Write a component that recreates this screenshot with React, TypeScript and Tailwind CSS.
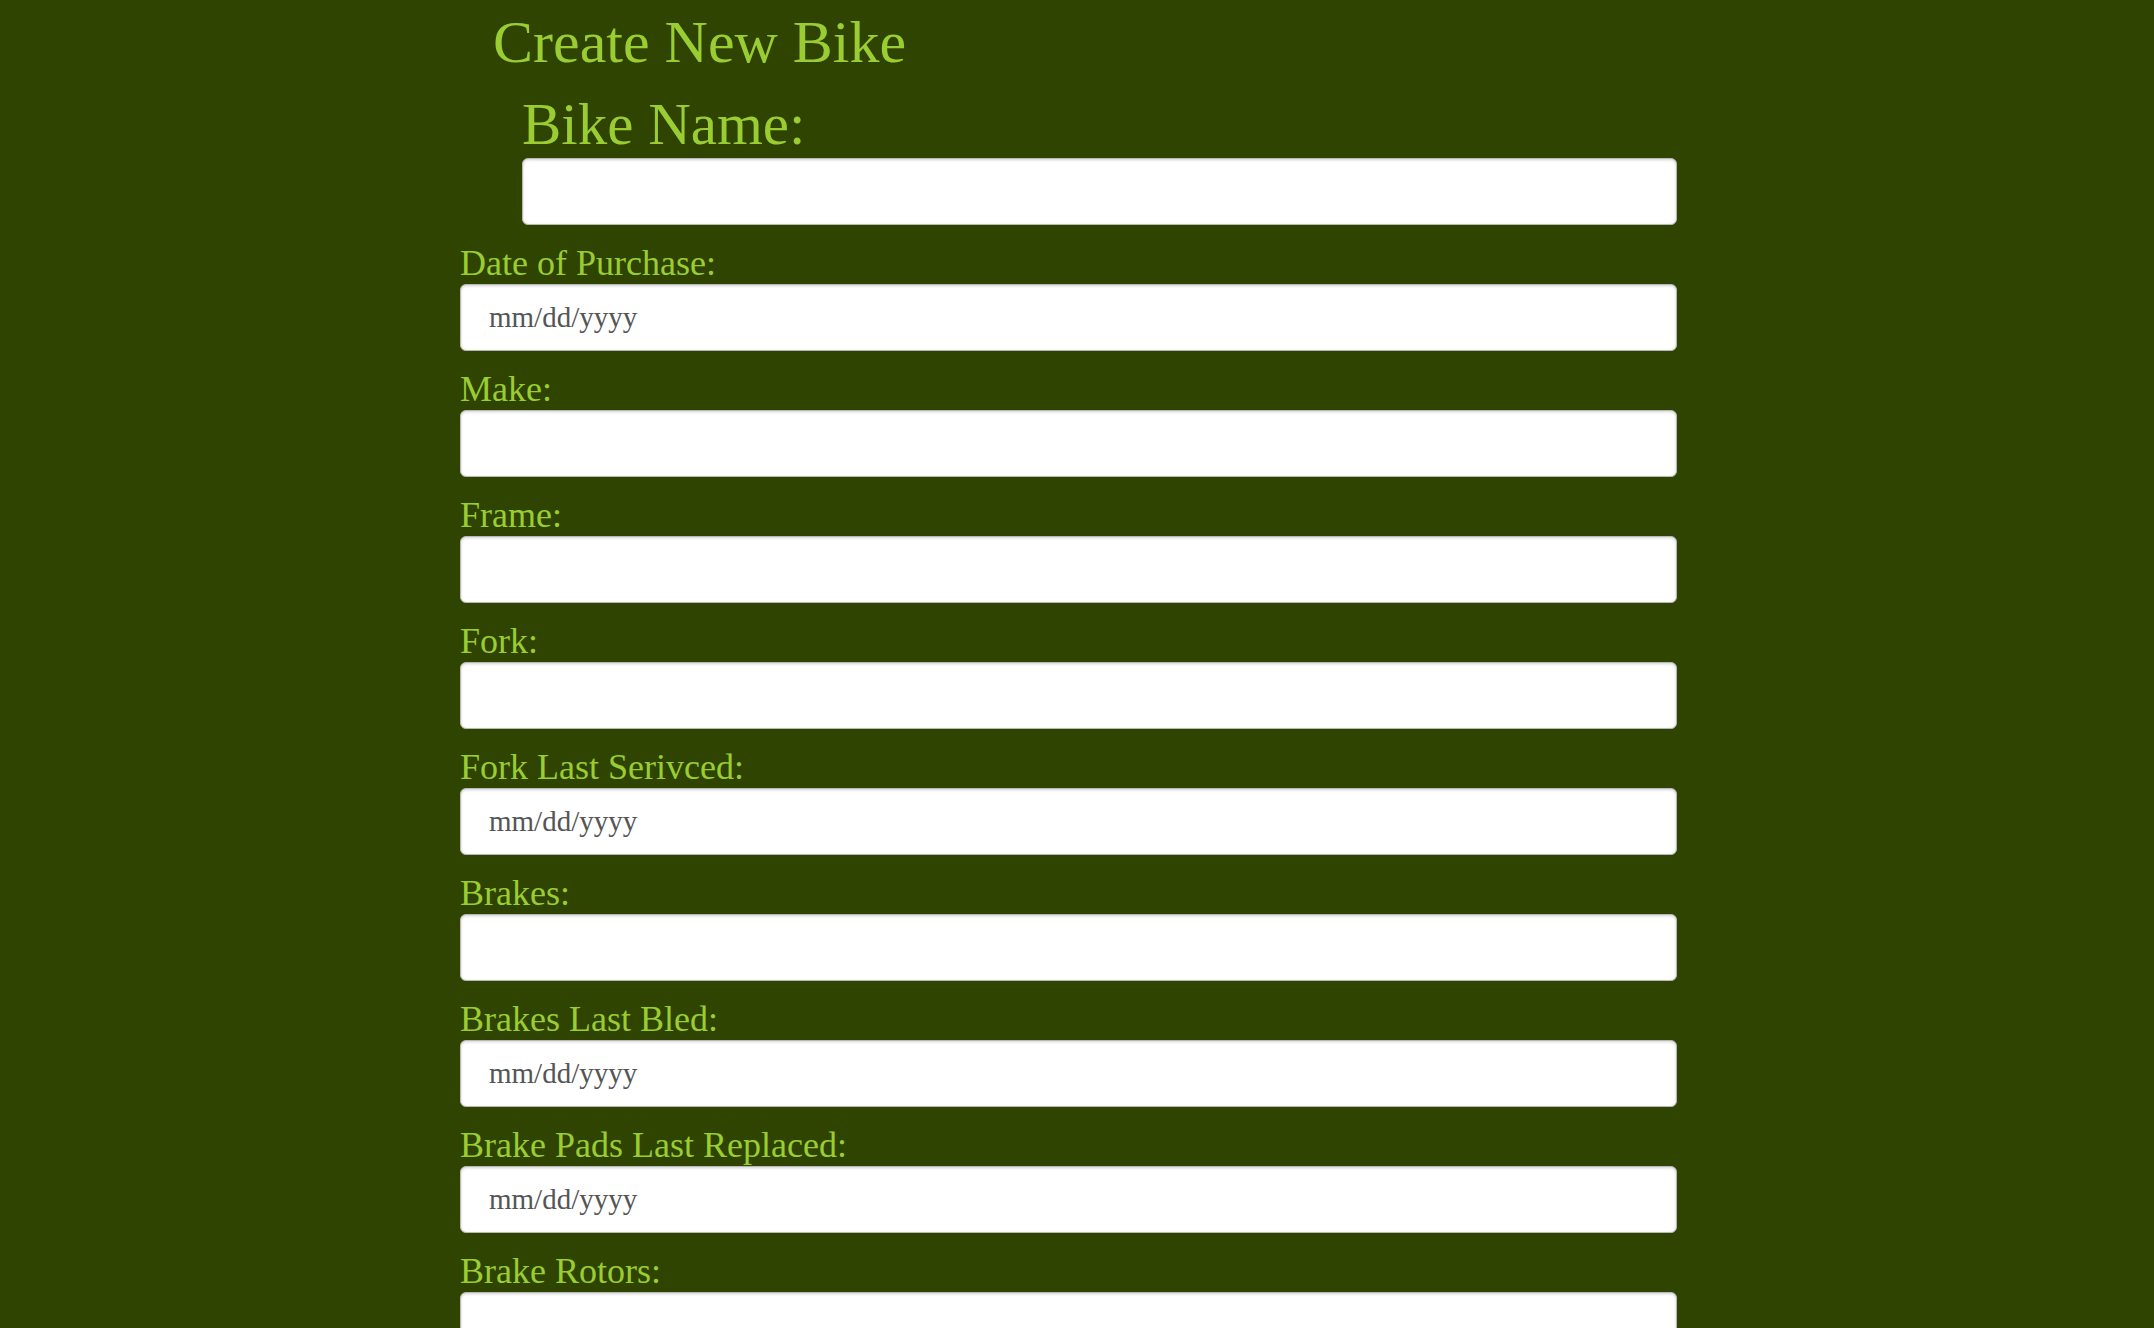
import React from "react";

interface Field {
  label: string;
  date?: boolean;
}

const fields: Field[] = [
  { label: "Date of Purchase:", date: true },
  { label: "Make:" },
  { label: "Frame:" },
  { label: "Fork:" },
  { label: "Fork Last Serivced:", date: true },
  { label: "Brakes:" },
  { label: "Brakes Last Bled:", date: true },
  { label: "Brake Pads Last Replaced:", date: true },
  { label: "Brake Rotors:" },
];

const inputClass =
  "box-border h-[67px] w-full rounded-[6px] border border-[#b8b8b8] bg-white pl-[28px] text-[29px] text-[#555] shadow-[inset_0_1px_3px_rgba(0,0,0,0.18)] outline-none placeholder:text-[#555]";

export default function App() {
  return (
    <div className="min-h-screen bg-[#2f4400] font-['Liberation_Serif',serif] text-[#9acd32]">
      <div className="ml-[460px] w-[1217px] pt-[12px]">
        <h1 className="ml-[33px] text-[60px] font-normal leading-[60px]">
          Create New Bike
        </h1>

        <form className="mt-[23px] flex flex-col">
          {/* Nombre: va más grande y con sangría */}
          <div className="mb-5 ml-[62px] flex flex-col">
            <label className="text-[59px] leading-[58px]">Bike Name:</label>
            <input type="text" className={`mt-[5px] ${inputClass}`} />
          </div>

          {fields.map((f) => (
            <div key={f.label} className="mb-5 flex flex-col">
              <label className="text-[36px] leading-[36px]">{f.label}</label>
              <input
                type="text"
                placeholder={f.date ? "mm/dd/yyyy" : undefined}
                className={`mt-[3px] ${inputClass}`}
              />
            </div>
          ))}
        </form>
      </div>
    </div>
  );
}
